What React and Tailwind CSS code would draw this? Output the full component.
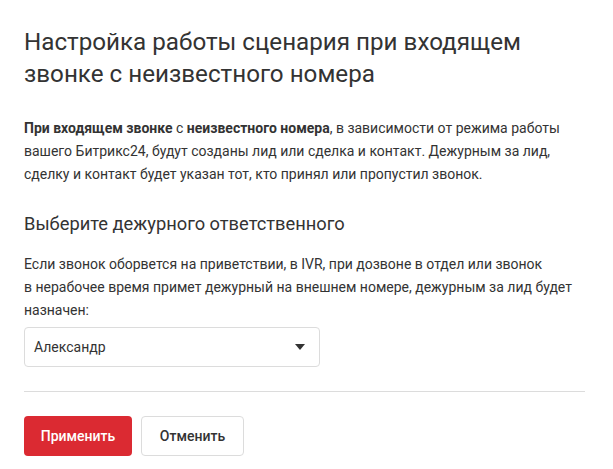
import React from 'react';

const App = () => {
    return (
        <div className="w-[613px] h-[469px] bg-white pl-6 pr-[28px] pt-[26px] text-[#333]" style={{ fontFamily: 'Roboto, "Noto Sans", sans-serif' }}>
            <h1 className="max-w-[530px] text-[24.2px] leading-[32px] font-normal">
                Настройка работы сценария при входящем звонке с неизвестного номера
            </h1>

            <p className="mt-[27px] text-[14px] leading-[23px]">
                <b className="font-bold">При входящем звонке</b> с <b className="font-bold">неизвестного номера</b>, в зависимости от режима работы
                вашего Битрикс24, будут созданы лид или сделка и контакт. Дежурным за лид,
                сделку и контакт будет указан тот, кто принял или пропустил звонок.
            </p>

            <h2 className="mt-[26px] text-[18.3px] leading-[24px] font-normal">
                Выберите дежурного ответственного
            </h2>

            <p className="mt-[17px] text-[14px] leading-[23px]">
                Если звонок оборвется на приветствии, в IVR, при дозвоне в отдел или звонок в{'\u00A0'}нерабочее время
                примет дежурный на внешнем номере, дежурным за лид будет назначен:
            </p>

            <div className="mt-[5px] w-[296px] h-[40px] border border-[#dcdcdc] rounded-[4px] flex items-center justify-between pl-[9px] pr-[14px]">
                <span className="text-[14px]">Александр</span>
                <svg width="10" height="6" viewBox="0 0 10 6">
                    <path d="M0 0 L10 0 L5 6 Z" fill="#333" />
                </svg>
            </div>

            <div className="mt-[24px] h-px bg-[#dcdcdc]"></div>

            <div className="mt-[24px] flex gap-[9px]">
                <button className="h-[40px] w-[108px] rounded-[4px] bg-[#db2a32] text-white text-[14px] font-medium">
                    Применить
                </button>
                <button className="h-[40px] w-[103px] rounded-[4px] bg-white border border-[#dcdcdc] text-[#333] text-[14px] font-medium">
                    Отменить
                </button>
            </div>
        </div>
    );
};

export default App;
